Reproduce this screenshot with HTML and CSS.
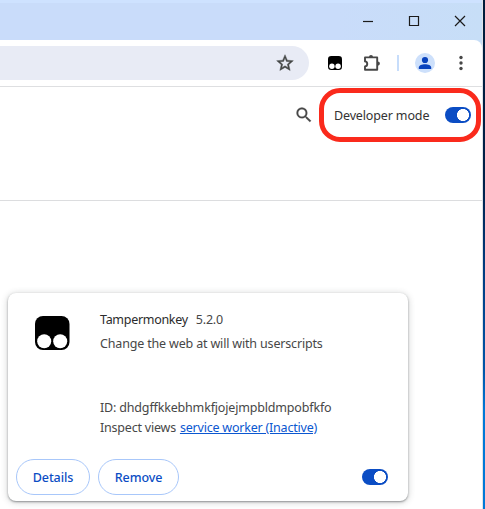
FILE: index.html
```
<!DOCTYPE html>
<html lang="en">
<head>
<meta charset="utf-8">
<title>Extensions</title>
<link rel="stylesheet" href="styles.css">
</head>
<body>
<div class="desktop">
<div class="window">
  <div class="titlebar">
    <svg width="12" height="12" viewBox="0 0 12 12"><path d="M1 6.5h10"/></svg>
    <svg width="12" height="12" viewBox="0 0 12 12"><path d="M1.5 1.5h9v9h-9z"/></svg>
    <svg width="12" height="12" viewBox="0 0 12 12"><path d="M1 1l10 10M11 1L1 11"/></svg>
  </div>
  <div class="toolbar">
    <div class="omnibox">
      <svg width="20" height="20" viewBox="0 0 24 24"><path fill="#444746" stroke="#444746" stroke-width=".5" d="M22 9.24l-7.19-.62L12 2 9.19 8.63 2 9.24l5.46 4.73L5.82 21 12 17.27 18.18 21l-1.63-7.03L22 9.24zM12 15.4l-3.76 2.27 1-4.28-3.32-2.88 4.38-.38L12 6.1l1.71 4.04 4.38.38-3.32 2.88 1 4.28L12 15.4z"/></svg>
    </div>
    <svg class="ext" width="14" height="14" viewBox="0 0 34 34"><rect width="34" height="34" rx="8"/><circle cx="9.5" cy="25" r="6.6" fill="#fff"/><circle cx="24.5" cy="25" r="6.6" fill="#fff"/></svg>
    <svg class="puzzle" width="18" height="18" viewBox="0 0 18 18"><path d="M2 3.4h12.2v12.4H2v-3.4c3-.4 3-4.6 0-5z" fill="none" stroke="#474747" stroke-width="1.9" stroke-linejoin="round"/><path d="M6 3a2 2 0 0 1 4 0zM14.8 7.5a2.1 2.1 0 0 1 0 4.2z" fill="#474747"/></svg>
    <span class="divider"></span>
    <svg class="avatar" width="20" height="20" viewBox="0 0 20 20"><circle cx="10" cy="10" r="10" fill="#cde0fb"/><circle cx="10" cy="7" r="3.1" fill="#0842bd"/><path d="M3.8 16v-1.5c0-4.5 12.4-4.5 12.4 0V16z" fill="#0842bd"/></svg>
    <svg class="menu" width="4" height="16" viewBox="0 0 4 16"><g fill="#474747"><circle cx="2" cy="2.5" r="1.7"/><circle cx="2" cy="8" r="1.7"/><circle cx="2" cy="13.5" r="1.7"/></g></svg>
  </div>
  <div class="page-header">
    <svg class="search" width="20" height="20" viewBox="0 0 24 24"><path fill="#474747" stroke="#474747" stroke-width=".3" d="M15.5 14h-.79l-.28-.27A6.471 6.471 0 0 0 16 9.5 6.5 6.5 0 1 0 9.5 16c1.61 0 3.09-.59 4.23-1.57l.27.28v.79l5 4.99L20.49 19l-4.99-5zm-6 0C7.01 14 5 11.99 5 9.5S7.01 5 9.5 5 14 7.01 14 9.5 11.99 14 9.5 14z"/></svg>
    <div class="dev-mode"><span class="dev-label">Developer mode</span><span class="toggle"></span></div>
  </div>
  <div class="page">
    <div class="card">
      <div class="card-main">
        <svg class="logo" width="36" height="36" viewBox="0 0 36 36"><rect x="1" y="1" width="34.5" height="34" rx="8"/><circle cx="10.2" cy="26.2" r="7" fill="#fff"/><circle cx="26.2" cy="26.2" r="7" fill="#fff"/></svg>
        <div class="info">
          <div class="name"><span class="title">Tampermonkey</span><span class="version">5.2.0</span></div>
          <div><span class="desc">Change the web at will with userscripts</span></div>
          <div class="ident"><span class="id">ID: dhdgffkkebhmkfjojejmpbldmpobfkfo</span></div>
          <div class="views"><span class="inspect">Inspect views</span><a class="link">service worker (Inactive)</a></div>
        </div>
      </div>
      <div class="actions">
        <button class="btn details">Details</button>
        <button class="btn remove">Remove</button>
        <span class="toggle"></span>
      </div>
    </div>
  </div>
</div>
</div>
</body>
</html>
```

FILE: styles.css
```
* { box-sizing: border-box; }
body { margin: 0; overflow: hidden; font: 12.5px/20px "Noto Sans", "Open Sans", sans-serif; color: #474747; }
svg { display: block; flex: none; }
.desktop { width: 485px; height: 509px; padding-right: 2px; background: linear-gradient(#001c3a 0, #002048 180px, #003c80 270px, #0056a8 370px, #0078d7 410px, #0078d7 100%); }
.window { height: 509px; background: linear-gradient(#c7def7 60px, #fff 60px); border-right: 1px solid #dfe3e8; display: flex; flex-direction: column; }
.titlebar { height: 40px; flex: none; display: flex; align-items: center; justify-content: flex-end; gap: 34px; padding-right: 16px; border-top: 3px solid #cee2ff; background: linear-gradient(90deg, #c9dcfa 0, #c9dcfa 70%, #c7def7 100%); }
.titlebar svg { fill: none; stroke: #1b1b1b; stroke-width: 1.2; margin-top: -2px; }
.toolbar { height: 47px; flex: none; display: flex; align-items: center; background: #fff; border-bottom: 1px solid #dedfe1; border-top-right-radius: 8px; }
.omnibox { width: 309px; height: 34px; border-radius: 0 17px 17px 0; background: #e8ebf5; display: flex; align-items: center; justify-content: flex-end; padding-right: 14px; }
.ext { margin-left: 19px; }
.puzzle { margin-left: 21px; }
.divider { width: 2px; height: 16px; margin-left: 16px; background: #c7ddfb; }
.avatar { margin-left: 16px; }
.menu { margin-left: 24px; }
.page-header { height: 114px; flex: none; display: flex; align-items: flex-start; justify-content: flex-end; padding-right: 1px; border-bottom: 1px solid #dcdddf; }
.search { margin: 18px 5px 0 0; }
.dev-mode { width: 162px; height: 54px; margin-top: 1px; border: 5px solid #fa2a1c; border-radius: 21px; display: flex; align-items: center; justify-content: space-between; padding: 0 5px 0 10px; }
.dev-label { padding-top: 1px; letter-spacing: -.14px; color: #333; }
.toggle { width: 26px; height: 16px; border-radius: 8px; background: radial-gradient(circle at 18px 8px, #fff 5.7px, #0b4dc4 6.3px); }
.page { padding: 92px 0 0 8px; }
.card { width: 400px; height: 208px; border-radius: 8px; background: #fff; box-shadow: 0 1px 2px rgba(60,64,67,.5), 0 1px 6px 1px rgba(60,64,67,.2); display: flex; flex-direction: column; justify-content: space-between; padding: 17px 20px 6px 8px; }
.card-main { display: flex; }
.logo { margin: 5px 30px 0 18px; }
.info { white-space: nowrap; }
.name { margin-bottom: 4px; color: #2b2b2b; }
.title { letter-spacing: -.3px; }
.version { margin-left: 8px; color: #474747; letter-spacing: -.2px; }
.desc, .id { letter-spacing: -.17px; }
.inspect, .link { letter-spacing: -.21px; }
.ident { margin-top: 44px; }
.link { margin-left: 4px; color: #0b57d0; text-decoration: underline; }
.actions { display: flex; align-items: center; }
.btn { height: 36px; padding: 2px 0 0; border: 1px solid #a8c7fa; border-radius: 18px; background: #fff; color: #0b4dc4; font: 500 12.5px/20px "Noto Sans", sans-serif; letter-spacing: -.1px; }
.details { width: 74px; }
.remove { width: 81px; margin-left: 8px; }
.actions .toggle { margin-left: auto; }
```
